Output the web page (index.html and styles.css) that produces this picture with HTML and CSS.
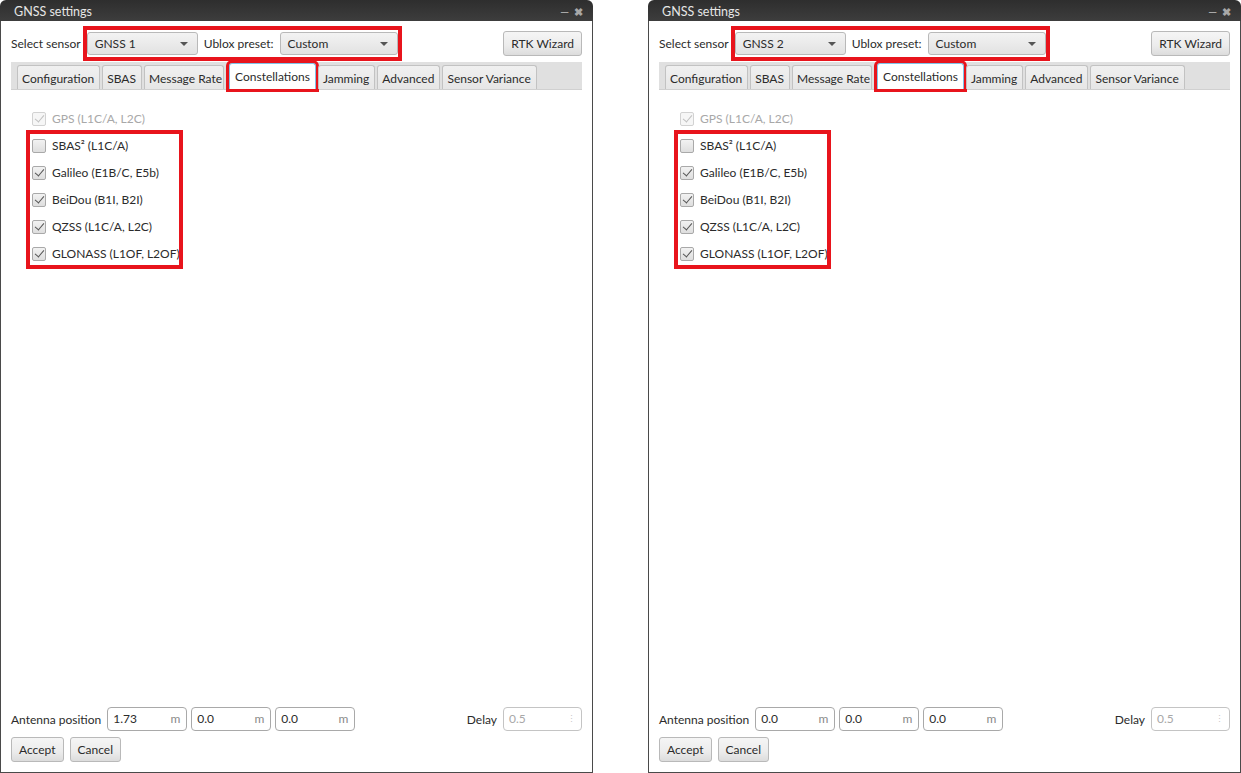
FILE: index.html
```html
<!DOCTYPE html>
<html lang="en">
<head>
  <meta charset="UTF-8">
  <title>GNSS settings</title>
  <link rel="stylesheet" href="styles.css">
</head>
<body>
  <div class="desktop">

    <!-- GNSS 1 window -->
    <div class="window">
      <div class="titlebar">
        <span class="title">GNSS settings</span>
        <span class="controls"><span class="min">&#8212;</span><span class="close">&#10006;</span></span>
      </div>
      <div class="body">
        <div class="toprow">
          <span class="label">Select sensor</span>
          <div class="mark-group">
            <div class="combo combo-sensor">GNSS 1<span class="arrow"></span></div>
            <span class="label">Ublox preset:</span>
            <div class="combo combo-preset">Custom<span class="arrow"></span></div>
          </div>
          <span class="spacer"></span>
          <button class="btn">RTK Wizard</button>
        </div>

        <div class="tabs">
          <span class="tab">Configuration</span>
          <span class="tab">SBAS</span>
          <span class="tab clipped">Message Rate</span>
          <span class="tab active">Constellations</span>
          <span class="tab">Jamming</span>
          <span class="tab">Advanced</span>
          <span class="tab">Sensor Variance</span>
        </div>

        <div class="content">
          <div class="check disabled"><span class="box on"></span>GPS (L1C/A, L2C)</div>
          <div class="check-group">
            <div class="check"><span class="box"></span>SBAS² (L1C/A)</div>
            <div class="check"><span class="box on"></span>Galileo (E1B/C, E5b)</div>
            <div class="check"><span class="box on"></span>BeiDou (B1I, B2I)</div>
            <div class="check"><span class="box on"></span>QZSS (L1C/A, L2C)</div>
            <div class="check"><span class="box on"></span>GLONASS (L1OF, L2OF)</div>
          </div>
        </div>

        <div class="posrow">
          <span class="label">Antenna position</span>
          <div class="field">1.73<span class="unit">m</span></div>
          <div class="field">0.0<span class="unit">m</span></div>
          <div class="field">0.0<span class="unit">m</span></div>
          <span class="spacer"></span>
          <span class="label">Delay</span>
          <div class="field delay">0.5<span class="spin">&#8942;</span></div>
        </div>

        <div class="btnrow">
          <button class="btn">Accept</button>
          <button class="btn">Cancel</button>
        </div>
      </div>
    </div>

    <!-- GNSS 2 window -->
    <div class="window">
      <div class="titlebar">
        <span class="title">GNSS settings</span>
        <span class="controls"><span class="min">&#8212;</span><span class="close">&#10006;</span></span>
      </div>
      <div class="body">
        <div class="toprow">
          <span class="label">Select sensor</span>
          <div class="mark-group">
            <div class="combo combo-sensor">GNSS 2<span class="arrow"></span></div>
            <span class="label">Ublox preset:</span>
            <div class="combo combo-preset">Custom<span class="arrow"></span></div>
          </div>
          <span class="spacer"></span>
          <button class="btn">RTK Wizard</button>
        </div>

        <div class="tabs">
          <span class="tab">Configuration</span>
          <span class="tab">SBAS</span>
          <span class="tab clipped">Message Rate</span>
          <span class="tab active">Constellations</span>
          <span class="tab">Jamming</span>
          <span class="tab">Advanced</span>
          <span class="tab">Sensor Variance</span>
        </div>

        <div class="content">
          <div class="check disabled"><span class="box on"></span>GPS (L1C/A, L2C)</div>
          <div class="check-group">
            <div class="check"><span class="box"></span>SBAS² (L1C/A)</div>
            <div class="check"><span class="box on"></span>Galileo (E1B/C, E5b)</div>
            <div class="check"><span class="box on"></span>BeiDou (B1I, B2I)</div>
            <div class="check"><span class="box on"></span>QZSS (L1C/A, L2C)</div>
            <div class="check"><span class="box on"></span>GLONASS (L1OF, L2OF)</div>
          </div>
        </div>

        <div class="posrow">
          <span class="label">Antenna position</span>
          <div class="field">0.0<span class="unit">m</span></div>
          <div class="field">0.0<span class="unit">m</span></div>
          <div class="field">0.0<span class="unit">m</span></div>
          <span class="spacer"></span>
          <span class="label">Delay</span>
          <div class="field delay">0.5<span class="spin">&#8942;</span></div>
        </div>

        <div class="btnrow">
          <button class="btn">Accept</button>
          <button class="btn">Cancel</button>
        </div>
      </div>
    </div>

  </div>
</body>
</html>
```

FILE: styles.css
```css
body {
  margin: 0;
  background: #ffffff;
  font-family: Lato, 'Noto Sans', sans-serif;
  font-size: 12px;
  color: #2b2b2b;
}

.desktop {
  display: flex;
  gap: 55px;
  width: 1241px;
  height: 773px;
}

.window {
  width: 593px;
  height: 773px;
  display: flex;
  flex-direction: column;
  box-sizing: border-box;
}

.titlebar {
  height: 21px;
  box-sizing: border-box;
  padding: 2px 10px 0 14px;
  background: linear-gradient(#2e2e2e, #3d3d3d);
  border-radius: 6px 6px 0 0;
  display: flex;
  align-items: center;
  color: #e6e6e6;
  font-size: 12.5px;
}

.title {
  flex: 1;
}

.controls {
  display: flex;
  gap: 5px;
  color: #a8a8a8;
  font-size: 11px;
  font-weight: bold;
}

.body {
  flex: 1;
  display: flex;
  flex-direction: column;
  border: 1px solid #4a4a4a;
  border-top: none;
  padding: 10px 10px 10px 10px;
}

.label {
  white-space: nowrap;
}

.spacer {
  flex: 1;
}

.toprow {
  display: flex;
  align-items: center;
  height: 25px;
}

.mark-group {
  display: flex;
  align-items: center;
  gap: 6px;
  margin-left: 6px;
  padding: 2px 0;
  outline: 4px solid #e8141c;
}

.combo {
  position: relative;
  box-sizing: border-box;
  height: 23px;
  line-height: 21px;
  padding-left: 7px;
  border: 1px solid #b9b9b9;
  border-radius: 3px;
  background: linear-gradient(#f3f3f3, #e2e2e2);
}

.combo-sensor {
  width: 111px;
}

.combo-preset {
  width: 118px;
}

.arrow {
  position: absolute;
  right: 9px;
  top: 9px;
  border-left: 4px solid transparent;
  border-right: 4px solid transparent;
  border-top: 4px solid #555;
}

.btn {
  font-family: inherit;
  font-size: 12px;
  color: #2b2b2b;
  height: 25px;
  padding: 0 7px;
  border: 1px solid #b9b9b9;
  border-radius: 3px;
  background: linear-gradient(#f5f5f5 0%, #ececec 60%, #dcdcdc 100%);
}

.tabs {
  margin-top: 6px;
  height: 28px;
  box-sizing: border-box;
  background: #e0e0e0;
  display: flex;
  align-items: flex-end;
  gap: 2px;
  padding-left: 6px;
  border-bottom: 1px solid #d0d0d0;
}

.tab {
  height: 24px;
  line-height: 23px;
  box-sizing: border-box;
  padding: 1px 5px 0 4px;
  border: 1px solid #c2c2c2;
  border-bottom: none;
  border-radius: 3px 3px 0 0;
  background: linear-gradient(#f0f0f0, #e6e6e6);
  white-space: nowrap;
}

.tab.clipped {
  padding-right: 1px;
}

.tab.active {
  height: 26px;
  line-height: 25px;
  margin-left: 3px;
  padding: 0 5px;
  background: #ffffff;
  border: 1px solid #7fc3e8;
  border-bottom: none;
  outline: 3px solid #e8141c;
  outline-offset: 0;
}

.content {
  flex: 1;
  padding: 15px 0 0 21px;
}

.check {
  display: flex;
  align-items: center;
  gap: 6px;
  height: 27px;
}

.check.disabled {
  color: #a8a8a8;
}

.check-group {
  display: inline-block;
  padding: 0 1px 0 4px;
  margin-left: -4px;
  outline: 4px solid #e8141c;
  outline-offset: -2px;
}

.box {
  width: 14px;
  height: 14px;
  box-sizing: border-box;
  border: 1px solid #a9a9a9;
  border-radius: 2px;
  background: linear-gradient(#f2f2f2, #dedede);
  position: relative;
}

.box.on::after {
  content: "";
  position: absolute;
  left: 4px;
  top: 0px;
  width: 4px;
  height: 8px;
  border-right: 1.5px solid #555;
  border-bottom: 1.5px solid #555;
  transform: rotate(40deg);
}

.check.disabled .box {
  border-color: #d2d2d2;
  background: #f6f6f6;
}

.check.disabled .box.on::after {
  border-color: #c0c0c0;
}

.posrow {
  display: flex;
  align-items: center;
  gap: 4px;
  height: 24px;
}

.posrow .label {
  margin-right: 2px;
}

.field {
  position: relative;
  box-sizing: border-box;
  width: 80px;
  height: 24px;
  line-height: 22px;
  padding-left: 5px;
  border: 1px solid #a9a9a9;
  border-radius: 4px;
  background: #ffffff;
}

.unit {
  position: absolute;
  right: 6px;
  color: #8a8a8a;
}

.field.delay {
  width: 79px;
  color: #a8a8a8;
  border-color: #c4c4c4;
}

.spin {
  position: absolute;
  right: 5px;
  font-size: 9px;
  color: #c8c8c8;
}

.btnrow {
  display: flex;
  gap: 6px;
  margin-top: 6px;
}

.btnrow .btn {
  height: 25px;
}
```
